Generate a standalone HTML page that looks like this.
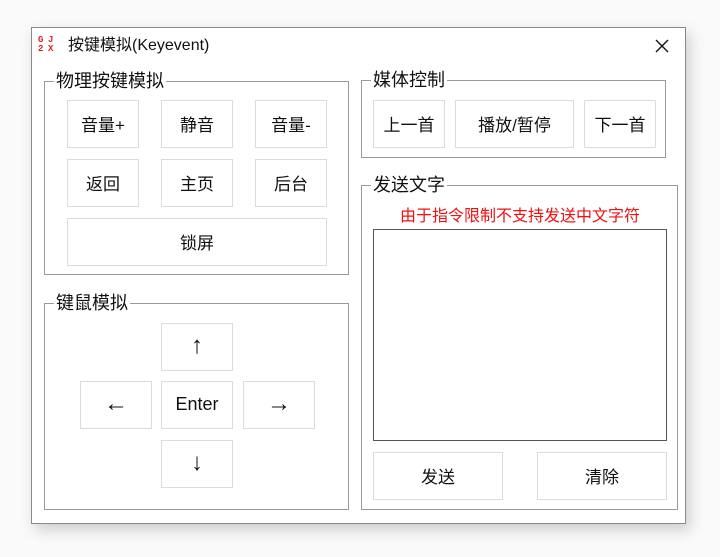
<!DOCTYPE html>
<html><head><meta charset="utf-8"><style>
*{box-sizing:border-box;margin:0;padding:0}
body{width:720px;height:557px;background:#fafafa;position:relative;overflow:hidden;font-family:"Liberation Sans","Noto Sans CJK SC",sans-serif;color:#111}
.win{position:absolute;left:31px;top:27px;width:655px;height:497px;background:#fff;border:1px solid #8a8a8a;box-shadow:4px 6px 14px rgba(0,0,0,.18)}
.a{position:absolute}
.grp{position:absolute;border:1px solid #9a9a9a}
.gt{position:absolute;background:#fff;font-size:18px;line-height:20px;padding:0 2px;top:-11px;left:9px;white-space:nowrap}
.b{position:absolute;border:1px solid #dcdcdc;background:#fff;display:flex;align-items:center;justify-content:center;font-size:17px;padding-bottom:2px}
.ar{font-size:24px}
.lg{position:absolute;color:#e02020;font-size:9px;line-height:9px;font-weight:bold;font-family:"Liberation Mono",monospace}
</style></head><body>
<div class="win">
 <span class="lg" style="left:6px;top:8px">G</span><span class="lg" style="left:16px;top:8px">J</span>
 <span class="lg" style="left:6px;top:17px">2</span><span class="lg" style="left:16px;top:17px">X</span>
 <div class="a" style="left:36px;top:8px;font-size:16px;line-height:20px">按键模拟(Keyevent)</div>
 <svg class="a" style="left:622px;top:10px" width="16" height="16"><path d="M2 2L14 14M14 2L2 14" stroke="#111" stroke-width="1.4"/></svg>
</div>
<div class="grp" style="left:44px;top:81px;width:305px;height:194px"><div class="gt">物理按键模拟</div></div>
<div class="b" style="left:67px;top:100px;width:72px;height:48px">音量+</div>
<div class="b" style="left:161px;top:100px;width:72px;height:48px">静音</div>
<div class="b" style="left:255px;top:100px;width:72px;height:48px">音量-</div>
<div class="b" style="left:67px;top:159px;width:72px;height:48px">返回</div>
<div class="b" style="left:161px;top:159px;width:72px;height:48px">主页</div>
<div class="b" style="left:255px;top:159px;width:72px;height:48px">后台</div>
<div class="b" style="left:67px;top:218px;width:260px;height:48px">锁屏</div>
<div class="grp" style="left:44px;top:303px;width:305px;height:207px"><div class="gt">键鼠模拟</div></div>
<div class="b ar" style="left:161px;top:323px;width:72px;height:48px">↑</div>
<div class="b ar" style="left:80px;top:381px;width:72px;height:48px">←</div>
<div class="b" style="left:161px;top:381px;width:72px;height:48px;font-size:18px">Enter</div>
<div class="b ar" style="left:243px;top:381px;width:72px;height:48px">→</div>
<div class="b ar" style="left:161px;top:440px;width:72px;height:48px">↓</div>
<div class="grp" style="left:361px;top:80px;width:305px;height:78px"><div class="gt">媒体控制</div></div>
<div class="b" style="left:373px;top:100px;width:72px;height:48px">上一首</div>
<div class="b" style="left:455px;top:100px;width:119px;height:48px">播放/暂停</div>
<div class="b" style="left:584px;top:100px;width:72px;height:48px">下一首</div>
<div class="grp" style="left:361px;top:185px;width:317px;height:325px"><div class="gt">发送文字</div></div>
<div class="a" style="left:373px;top:207px;width:294px;text-align:center;color:#f01010;font-size:16px;line-height:20px">由于指令限制不支持发送中文字符</div>
<div class="a" style="left:373px;top:229px;width:294px;height:212px;border:1px solid #555"></div>
<div class="b" style="left:373px;top:452px;width:130px;height:48px">发送</div>
<div class="b" style="left:537px;top:452px;width:130px;height:48px">清除</div>
</body></html>
